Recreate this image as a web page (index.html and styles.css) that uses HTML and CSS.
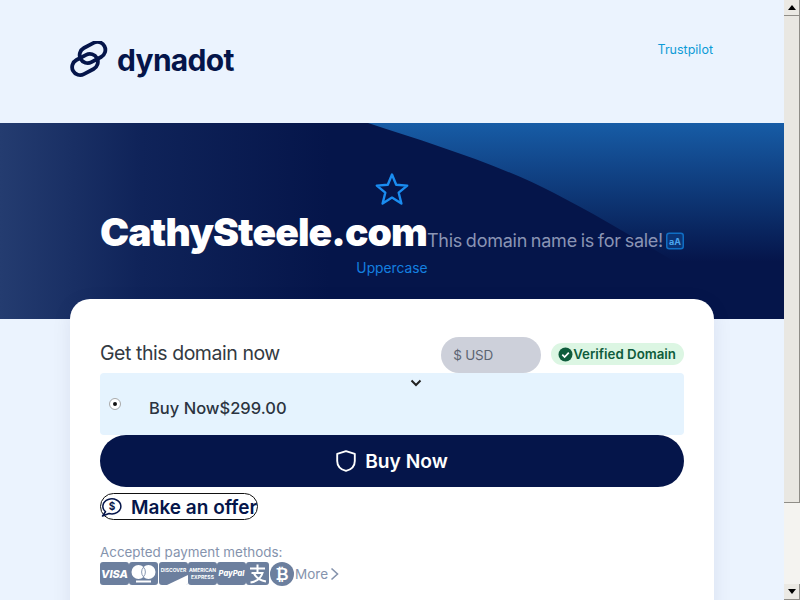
FILE: index.html
```html
<!DOCTYPE html>
<html lang="en">
<head>
    <meta charset="UTF-8">
    <title>CathySteele.com</title>
    <link rel="stylesheet" href="styles.css">
</head>
<body>
<div class="window">
    <div class="page">
        <header class="top">
            <a class="logo" href="#">
                <svg class="logo-mark" width="38" height="38" viewBox="0 0 38 38" fill="none" stroke="#05154a" stroke-width="3.800">
                    <rect x="9" y="3.500" width="27" height="16" rx="8" transform="rotate(-28 22.500 11.500)"/>
                    <rect x="1.500" y="15.500" width="27" height="16" rx="8" transform="rotate(-28 15 23.500)"/>
                </svg>
                <span class="logo-text">dynadot</span>
            </a>
            <a class="trust" href="#">Trustpilot</a>
        </header>

        <section class="hero">
            <svg class="hero-art" width="784" height="196" viewBox="0 0 784 196">
                <defs>
                    <linearGradient id="heroBlue" x1="0" y1="0" x2="0" y2="1">
                        <stop offset="0" stop-color="#175ca6"/>
                        <stop offset=".78" stop-color="#05154a"/>
                    </linearGradient>
                </defs>
                <path d="M368 0C430 20 500 42 554 70S660 130 740 178L784 178V0Z" fill="url(#heroBlue)"/>
            </svg>
            <div class="hero-inner">
                <svg class="star" width="36" height="36" viewBox="0 0 36 36" fill="none" stroke="#1a8cf0" stroke-width="2.400" stroke-linejoin="round">
                    <path d="M18 3.500l4.200 10.300 11 .8-8.500 7.100 2.700 10.800L18 26.600 8.600 32.500l2.700-10.800-8.500-7.100 11-.8z"/>
                </svg>
                <div class="title-row">
                    <h1 class="domain">CathySteele.com</h1>
                    <span class="forsale">This domain name is for sale!</span>
                    <svg class="case-icon" width="18" height="18" viewBox="0 0 18 18">
                        <rect x=".75" y="1.250" width="16.500" height="15.500" rx="2.500" fill="#0a3476" stroke="#0f6ec4" stroke-width="1.500"/>
                        <text x="9" y="12.500" text-anchor="middle" class="case-text">aA</text>
                    </svg>
                </div>
                <a class="upper" href="#">Uppercase</a>
            </div>
        </section>

        <main class="card">
            <div class="card-head">
                <h2 class="get">Get this domain now</h2>
                <div class="currency">$ USD</div>
                <div class="verified">
                    <svg width="15" height="15" viewBox="0 0 15 15">
                        <circle cx="7.500" cy="7.500" r="7" fill="#0f5c3c"/>
                        <path d="M4.300 7.700l2.300 2.300 4.200-4.400" fill="none" stroke="#fff" stroke-width="1.700"/>
                    </svg>
                    <span>Verified Domain</span>
                </div>
            </div>
            <div class="option">
                <svg class="chev" width="12" height="8" viewBox="0 0 12 8" fill="none" stroke="#222" stroke-width="2">
                    <path d="M1.500 1.500L6 6l4.500-4.500"/>
                </svg>
                <span class="radio"></span>
                <span class="option-text">Buy Now$299.00</span>
            </div>
            <a class="buy" href="#">
                <svg width="20" height="22" viewBox="2 1 18 20" fill="none" stroke="#fff" stroke-width="1.700" stroke-linejoin="round">
                    <path d="M11 2l8 2.600v6.400c0 5-3.600 7.900-8 9-4.400-1.100-8-4-8-9V4.600z"/>
                </svg>
                <span>Buy Now</span>
            </a>
            <a class="offer" href="#">
                <svg width="22" height="22" viewBox="0 0 22 22" fill="none" stroke="#05154a" stroke-width="1.500">
                    <path d="M4.500 15.700A9 7.500 0 1 1 8 17.500l-6.500 2.500z" stroke-linejoin="round"/>
                    <text x="11" y="14" text-anchor="middle" class="dollar">$</text>
                </svg>
                <span>Make an offer</span>
            </a>
            <p class="accepted">Accepted payment methods:</p>
            <div class="pay-row">
                <svg width="29" height="23" viewBox="0 0 29 23"><rect width="29" height="23" rx="3" fill="#6c7f9e"/><text x="14.500" y="15.500" text-anchor="middle" class="pay-visa">VISA</text></svg>
                <svg width="29" height="23" viewBox="0 0 29 23"><rect width="29" height="23" rx="3" fill="#6c7f9e"/><circle cx="9.500" cy="10" r="7" fill="#fff"/><circle cx="19.500" cy="10" r="7" fill="#fff"/><path d="M14.500 5.200a7 7 0 0 1 0 9.600a7 7 0 0 1 0-9.600z" fill="#fff" stroke="#6c7f9e" stroke-width=".8"/><rect x="7" y="18.500" width="15" height="2" fill="#fff"/></svg>
                <svg width="29" height="23" viewBox="0 0 29 23"><rect width="29" height="23" rx="3" fill="#6c7f9e"/><text x="14.500" y="10" text-anchor="middle" class="pay-small">DISCOVER</text><path d="M8 23L29 13V21a2 2 0 0 1-2 2z" fill="#fff"/></svg>
                <svg width="29" height="23" viewBox="0 0 29 23"><rect width="29" height="23" rx="3" fill="#6c7f9e"/><text x="14.500" y="10" text-anchor="middle" class="pay-small">AMERICAN</text><text x="14.500" y="17" text-anchor="middle" class="pay-small">EXPRESS</text></svg>
                <svg width="29" height="23" viewBox="0 0 29 23"><rect width="29" height="23" rx="3" fill="#6c7f9e"/><text x="14.500" y="14" text-anchor="middle" class="pay-paypal">PayPal</text></svg>
                <svg width="23" height="23" viewBox="0 0 23 23"><rect width="23" height="23" rx="3" fill="#6c7f9e"/><path d="M4 6.500h15M11.500 2.500V11M5.500 11h11c-1.500 5-6 8.500-12 9.500M8 11.500c2 4 6 7 12 8" fill="none" stroke="#fff" stroke-width="2"/></svg>
                <svg class="coin" width="24" height="24" viewBox="0 0 24 24"><circle cx="12" cy="12" r="12" fill="#6c7f9e"/><text x="12" y="17.500" text-anchor="middle" class="pay-btc">₿</text></svg>
                <span class="more">More</span>
                <svg width="9" height="14" viewBox="0 0 9 14" fill="none" stroke="#8593ad" stroke-width="1.600"><path d="M1.500 1.500L7.500 7l-6 5.500"/></svg>
            </div>
        </main>
    </div>
    <div class="scrollbar">
        <div class="sb-btn"><span class="arrow-up"></span></div>
        <div class="sb-thumb"></div>
        <div class="sb-track"></div>
        <div class="sb-btn"><span class="arrow-down"></span></div>
    </div>
</div>
</body>
</html>
```

FILE: styles.css
```css
* {
    box-sizing: border-box;
}

html, body {
    margin: 0;
    height: 100%;
    overflow: hidden;
}

body {
    font-family: Inter, "Liberation Sans", sans-serif;
    color: #2b3340;
}

a {
    text-decoration: none;
}

svg {
    flex-shrink: 0;
}

.window {
    display: flex;
    height: 600px;
    overflow: hidden;
}

.page {
    flex: 1;
    background: #ebf3fe;
    overflow: hidden;
}

.top {
    height: 123px;
    padding: 40px 71px 0 70px;
    display: flex;
    justify-content: space-between;
    align-items: flex-start;
}

.logo {
    display: flex;
    align-items: center;
    gap: 9px;
}

.logo-text {
    font-size: 30px;
    line-height: 40px;
    font-weight: 700;
    letter-spacing: -.7px;
    color: #05154a;
}

.trust {
    margin-top: 1px;
    font-size: 12.500px;
    line-height: 18px;
    color: #0d9ad6;
}

.hero {
    position: relative;
    height: 196px;
    background: linear-gradient(90deg, #243c70 0, #0f2359 18%, #05154a 42%);
}

.hero-art {
    position: absolute;
    top: 0;
    left: 0;
}

.hero-inner {
    position: relative;
    display: flex;
    flex-direction: column;
    align-items: center;
    padding-top: 48px;
}

.star {
    display: block;
}

.title-row {
    display: flex;
    align-items: center;
    margin-top: 2px;
}

.domain {
    margin: 0;
    font-size: 39px;
    line-height: 46px;
    font-weight: 900;
    letter-spacing: -.9px;
    color: #fff;
}

.forsale {
    margin: 16px 3px 0 0;
    font-size: 18px;
    letter-spacing: -.25px;
    word-spacing: -1px;
    white-space: nowrap;
    color: #8a94b4;
}

.case-icon {
    margin-top: 18px;
}

.case-text {
    font-size: 9px;
    font-weight: 700;
    fill: #4aa5ee;
}

.upper {
    margin-top: 4px;
    font-size: 13.800px;
    line-height: 18px;
    color: #1480e0;
}

.card {
    position: relative;
    margin: -20px 70px 0;
    padding: 38px 30px 30px;
    background: #fff;
    border-radius: 20px;
    box-shadow: 0 4px 20px rgba(5, 21, 74, .08);
    height: 400px;
}

.card-head {
    display: flex;
    align-items: center;
    height: 36px;
    gap: 10px;
}

.get {
    flex: 1;
    margin: 0 0 4px;
    font-size: 19.500px;
    font-weight: 400;
    letter-spacing: -.45px;
    color: #333a42;
}

.currency {
    width: 100px;
    height: 36px;
    padding: 10px 12px 0;
    font-size: 13.500px;
    line-height: 16px;
    letter-spacing: -.2px;
    color: #5b6472;
    background: #cdd0da;
    border-radius: 18px;
}

.verified {
    display: flex;
    align-items: center;
    height: 22px;
    margin-top: -2px;
    padding: 0 8px 0 7px;
    font-size: 13.300px;
    font-weight: 600;
    color: #0f5c3c;
    background: #dcf6e3;
    border-radius: 11px;
}

.option {
    position: relative;
    display: flex;
    align-items: center;
    height: 62px;
    padding: 8px 0 0 10px;
    background: #e5f3fe;
    border-radius: 4px;
}

.chev {
    position: absolute;
    top: 6px;
    left: 310px;
}

.radio {
    width: 10px;
    height: 10px;
    margin-top: -9px;
    border: 3px solid #fff;
    outline: 1px solid #aaa;
    background: #111;
    border-radius: 50%;
}

.option-text {
    margin-left: 29px;
    font-size: 16.500px;
    font-weight: 500;
}

.buy {
    display: flex;
    justify-content: center;
    align-items: center;
    gap: 9px;
    height: 52px;
    font-size: 19.200px;
    font-weight: 600;
    color: #fff;
    background: #05154a;
    border-radius: 26px;
}

.offer {
    display: flex;
    align-items: center;
    gap: 8px;
    width: 158px;
    height: 27px;
    margin-top: 6px;
    font-size: 19px;
    line-height: 25px;
    font-weight: 600;
    white-space: nowrap;
    color: #05154a;
    border: 1px solid #111;
    border-radius: 14px;
}

.offer span {
    padding-top: 1px;
}

.dollar {
    font-size: 10px;
    font-weight: 700;
    fill: #05154a;
    stroke: none;
}

.accepted {
    margin: 23px 0 0;
    font-size: 13.400px;
    line-height: 18px;
    color: #8593ad;
}

.pay-row {
    display: flex;
    align-items: center;
    gap: .3px;
    height: 25px;
}

.pay-visa {
    font-size: 11px;
    font-weight: 800;
    font-style: italic;
    fill: #fff;
}

.pay-small {
    font-size: 5px;
    font-weight: 700;
    fill: #fff;
}

.pay-paypal {
    font-size: 7.500px;
    font-weight: 800;
    font-style: italic;
    fill: #fff;
}

.pay-btc {
    font-size: 16px;
    font-weight: 800;
    font-family: "DejaVu Sans", sans-serif;
    fill: #fff;
}

.more {
    margin: 0 2px 0 1px;
    font-size: 13.500px;
    color: #8593ad;
}

.scrollbar {
    display: flex;
    flex-direction: column;
    width: 16px;
    height: 600px;
    background: #f4f3f0;
}

.sb-btn {
    display: flex;
    justify-content: center;
    align-items: center;
    height: 16px;
    background: #ebe9e4;
    border-bottom: 1px solid #8f8d88;
    border-right: 1px solid #8f8d88;
}

.sb-thumb {
    height: 487px;
    background: #e9e7e2;
    border-bottom: 1px solid #8f8d88;
    border-right: 1px solid #8f8d88;
}

.sb-track {
    flex: 1;
}

.arrow-up {
    border: 4px solid transparent;
    border-top: 0;
    border-bottom: 5px solid #000;
}

.arrow-down {
    border: 4px solid transparent;
    border-bottom: 0;
    border-top: 5px solid #000;
}
```
